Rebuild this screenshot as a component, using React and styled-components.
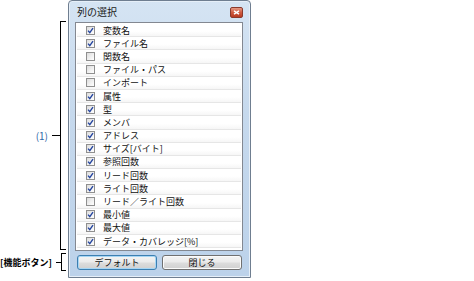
import React from 'react'
import styled, { createGlobalStyle } from 'styled-components'

const GlobalStyle = createGlobalStyle`
  body {
    margin: 0;
    background: #ffffff;
    font-family: "Noto Sans CJK JP", "DejaVu Sans", sans-serif;
  }
`

const columns = [
  { name: '変数名', checked: true },
  { name: 'ファイル名', checked: true },
  { name: '関数名', checked: false },
  { name: 'ファイル・パス', checked: false },
  { name: 'インポート', checked: false },
  { name: '属性', checked: true },
  { name: '型', checked: true },
  { name: 'メンバ', checked: true },
  { name: 'アドレス', checked: true },
  { name: 'サイズ[バイト]', checked: true },
  { name: '参照回数', checked: true },
  { name: 'リード回数', checked: true },
  { name: 'ライト回数', checked: true },
  { name: 'リード／ライト回数', checked: false },
  { name: '最小値', checked: true },
  { name: '最大値', checked: true },
  { name: 'データ・カバレッジ[%]', checked: true },
]

const Page = styled.div`
  display: flex;
  align-items: flex-start;
  width: 474px;
  height: 281px;
`

const Notes = styled.div`
  width: 68px;
  display: flex;
  flex-direction: column;
  padding-top: 21px;
  gap: 3px;
`

const Note = styled.div`
  display: flex;
  align-items: center;
  justify-content: flex-end;
  height: ${p => p.$h}px;
  padding-right: 2px;
`

const NoteLabel = styled.span`
  font-size: ${p => (p.$bold ? 9 : 10)}px;
  font-weight: ${p => (p.$bold ? 700 : 400)};
  color: ${p => p.$color || '#000'};
  white-space: nowrap;
  margin-right: 4px;
  line-height: 1;
`

const Tick = styled.div`
  width: 8px;
  height: 1px;
  background: #000;
`

const Brace = styled.div`
  width: 5px;
  align-self: stretch;
  border: 1px solid #000;
  border-right: none;
`

const Window = styled.div`
  width: 183px;
  height: 278px;
  box-sizing: border-box;
  border: 1px solid #6f7e90;
  border-radius: 4px 4px 0 0;
  background: linear-gradient(to bottom, #d5e4f3 0%, #c6d9ed 40%, #bcd2ea 100%);
  box-shadow: inset 0 0 0 1px #e6eff8;
  display: flex;
  flex-direction: column;
  padding: 0 7px 0 6px;
`

const TitleBar = styled.div`
  height: 21px;
  display: flex;
  align-items: center;
  justify-content: space-between;
  padding-left: 2px;
`

const Title = styled.span`
  font-size: 10px;
  color: #1a1a1a;
  line-height: 1;
  margin-top: 1px;
`

const Close = styled.div`
  width: 11px;
  height: 9px;
  margin-top: 2px;
  border: 1px solid #8a3a2c;
  border-radius: 2px;
  background: linear-gradient(to bottom, #e59a84 0%, #cf5a40 50%, #b83b22 100%);
  display: flex;
  align-items: center;
  justify-content: center;
`

const List = styled.div`
  height: 229px;
  box-sizing: border-box;
  border: 1px solid #838891;
  background: #ffffff;
  padding: 1px 1px 0;
  overflow: hidden;
`

const Row = styled.div`
  height: 13.2px;
  box-sizing: border-box;
  display: flex;
  align-items: center;
  padding-left: 9px;
  border-bottom: 1px solid #e6e6e6;
  background: linear-gradient(to bottom, #ffffff 60%, #f6f6f6 100%);
`

const Box = styled.div`
  width: 9px;
  height: 9px;
  box-sizing: border-box;
  border: 1px solid #8f8f8f;
  background: linear-gradient(135deg, #dcdcdc 0%, #f2f2f2 60%, #ffffff 100%);
  display: flex;
  align-items: center;
  justify-content: center;
  margin-right: 8px;
`

const Label = styled.span`
  font-size: 9px;
  color: #111;
  line-height: 1;
  white-space: nowrap;
`

const Buttons = styled.div`
  display: flex;
  justify-content: space-between;
  padding: 4px 1px 0 2px;
`

const Button = styled.div`
  width: 80px;
  height: 15px;
  box-sizing: border-box;
  border: 1px solid ${p => (p.$default ? '#3c7fb1' : '#707070')};
  border-radius: 3px;
  background: linear-gradient(to bottom, #f4f4f4 0%, #ebebeb 48%, #dddddd 52%, #d0d0d0 100%);
  box-shadow: inset 0 0 0 1px ${p => (p.$default ? '#a6d6f5' : '#fbfbfb')};
  display: flex;
  align-items: center;
  justify-content: center;
  font-size: 9px;
  color: #111;
  line-height: 1;
`

const Check = () => (
  <svg width="7" height="7" viewBox="0 0 7 7">
    <path d="M1 3.6 L2.8 5.6 L6 1.2" fill="none" stroke="#24459f" strokeWidth="1.4" />
  </svg>
)

const CloseIcon = () => (
  <svg width="7" height="5" viewBox="0 0 7 5">
    <path d="M1 0.8 L6 4.2 M6 0.8 L1 4.2" stroke="#ffffff" strokeWidth="1.4" />
  </svg>
)

export default function App() {
  return (
    <Page>
      <GlobalStyle />
      <Notes>
        <Note $h={229}>
          <NoteLabel $color="#2f69a8">(1)</NoteLabel>
          <Tick />
          <Brace />
        </Note>
        <Note $h={18}>
          <NoteLabel $bold>[機能ボタン]</NoteLabel>
          <Tick />
          <Brace />
        </Note>
      </Notes>
      <Window>
        <TitleBar>
          <Title>列の選択</Title>
          <Close><CloseIcon /></Close>
        </TitleBar>
        <List>
          {columns.map(c => (
            <Row key={c.name}>
              <Box>{c.checked && <Check />}</Box>
              <Label>{c.name}</Label>
            </Row>
          ))}
        </List>
        <Buttons>
          <Button $default>デフォルト</Button>
          <Button>閉じる</Button>
        </Buttons>
      </Window>
    </Page>
  )
}
